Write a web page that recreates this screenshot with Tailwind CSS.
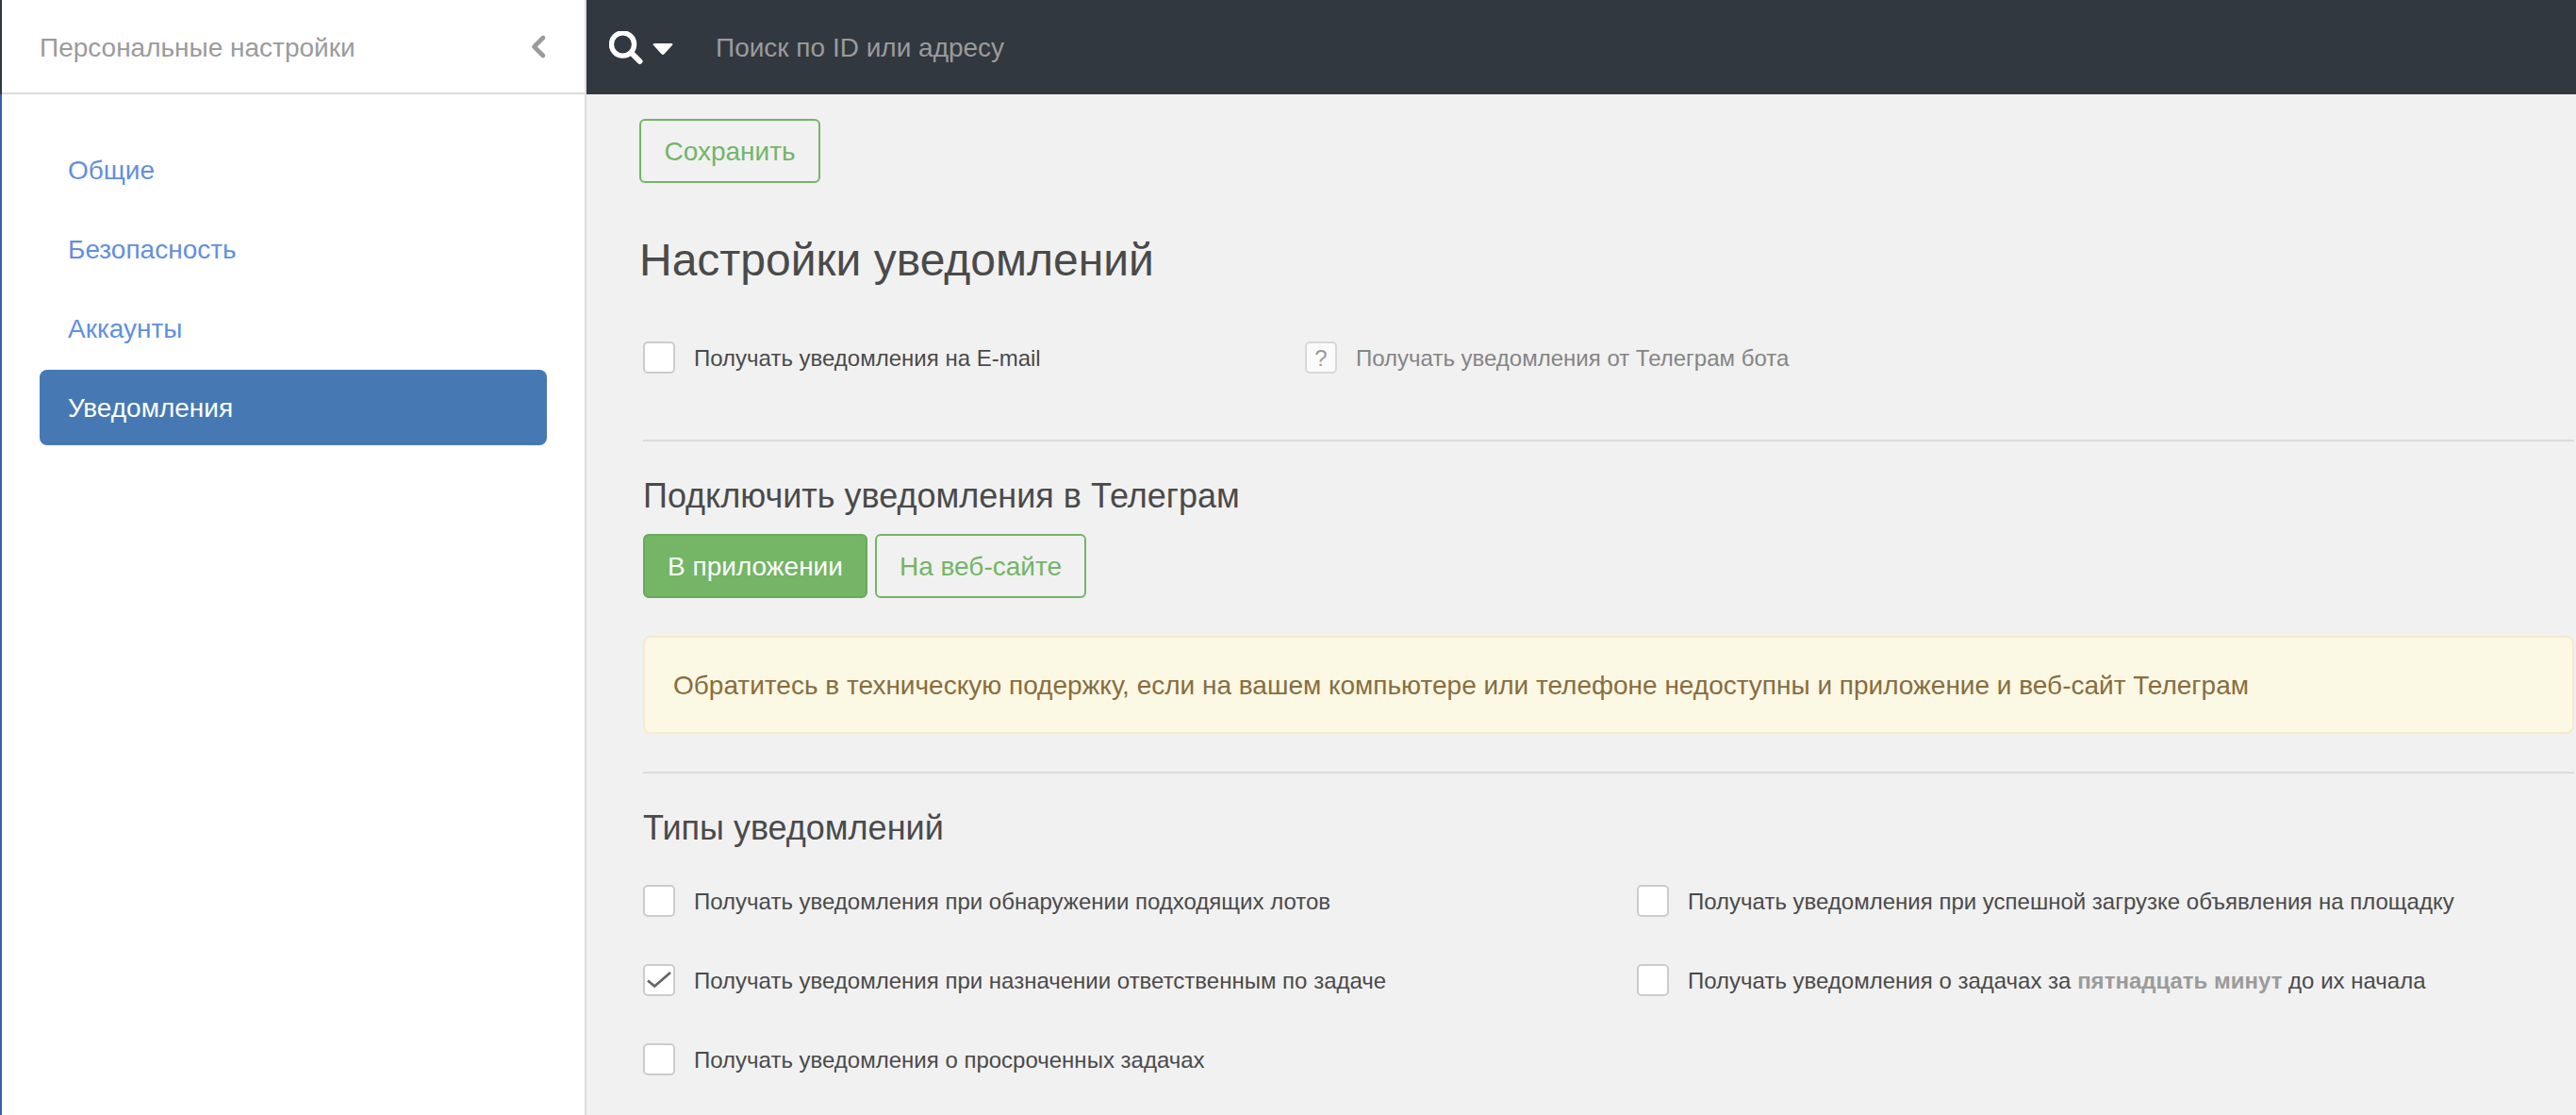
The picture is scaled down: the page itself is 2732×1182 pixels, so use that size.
<!DOCTYPE html>
<html lang="ru">
<head>
    <meta charset="UTF-8">
    <meta name="viewport" content="width=device-width, initial-scale=1.0">
    <title>Настройки уведомлений</title>
    <script src="https://cdn.jsdelivr.net/npm/@tailwindcss/browser@4"></script>
    <style>
        body {
            font-family: 'Liberation Sans', Arial, sans-serif;
        }
    </style>
</head>
<body class="flex h-screen overflow-hidden bg-[#f1f1f1] text-[28px] leading-10 text-[#4a4a4a]">
    <!-- Collapsed main menu edge -->
    <div class="w-0.5 shrink-0 bg-[#3a5fa8]">
        <div class="h-[100px] bg-[#323840]"></div>
    </div>

    <aside class="w-[620px] shrink-0 border-r-2 border-[#dcdcdc] bg-white">
        <div class="flex h-[100px] items-center justify-between border-b-2 border-[#dcdcdc] pl-10 pr-10 text-[#9b9b9b]">
            <span class="pt-1">Персональные настройки</span>
            <svg class="h-7 w-[18px]" viewBox="0 0 18 28" fill="none" stroke="currentColor" stroke-width="4.6" stroke-linecap="round" stroke-linejoin="round">
                <path d="M14 5 4.500 14.500 14 24"/>
            </svg>
        </div>
        <nav class="flex flex-col gap-1 px-10 pt-10 text-[#628fdf]">
            <a href="#" class="rounded-lg px-[30px] pt-[21px] pb-[19px]">Общие</a>
            <a href="#" class="rounded-lg px-[30px] pt-[21px] pb-[19px]">Безопасность</a>
            <a href="#" class="rounded-lg px-[30px] pt-[21px] pb-[19px]">Аккаунты</a>
            <a href="#" class="rounded-lg bg-[#4679b3] px-[30px] pt-[21px] pb-[19px] text-white">Уведомления</a>
        </nav>
    </aside>

    <div class="min-w-0 flex-1">
        <header class="flex h-[100px] items-center bg-[#323840] pl-6 text-[#9b9b9b]">
            <svg class="mt-0.5 h-9 w-9" viewBox="0 0 36 36" fill="none" stroke="#fff">
                <circle cx="14.500" cy="14" r="12.100" stroke-width="5.400"/>
                <path d="M24.500 24 32.500 32" stroke-width="6" stroke-linecap="round"/>
            </svg>
            <svg class="ml-2.5 mt-1 h-3 w-[22px]" viewBox="0 0 22 12" fill="#fff">
                <path d="M1.500 0h19q1.500.5.600 1.700l-8.600 9.500q-1.500 1.400-3 0L.9 1.700Q0 .5 1.500 0Z"/>
            </svg>
            <span class="ml-[45px] pt-0.5">Поиск по ID или адресу</span>
        </header>

        <main class="pl-[60px] pr-0.5 pt-[26px]">
            <button class="-ml-1 block h-[68px] w-48 rounded-md border-2 border-[#73b566] pt-0.5 text-[#73b566]">Сохранить</button>
            <h1 class="-ml-1 mt-[52px] text-5xl leading-[60px]">Настройки уведомлений</h1>

            <div class="mt-14 flex text-2xl leading-9">
                <label class="flex h-[34px] w-[702px] gap-5">
                    <span class="size-[34px] rounded-[5px] border-2 border-[#cccccc] bg-white"></span>
                    Получать уведомления на E-mail
                </label>
                <label class="flex h-[34px] gap-5 text-[#858585]">
                    <span class="size-[34px] rounded-[5px] border-2 border-[#d8d8d8] bg-[#fbfbfb] text-center leading-8 text-[#9b9b9b]">?</span>
                    Получать уведомления от Телеграм бота
                </label>
            </div>

            <hr class="mt-[70px] border-t-2 border-[#dcdcdc]">

            <h2 class="mt-9 text-4xl leading-[44px]">Подключить уведомления в Телеграм</h2>
            <div class="mt-[18px] flex gap-2">
                <button class="h-[68px] w-[238px] rounded-md border-2 border-[#69aa5c] bg-[#74b566] pt-0.5 text-white">В приложении</button>
                <button class="h-[68px] w-56 rounded-md border-2 border-[#73b566] pt-0.5 text-[#73b566]">На веб-сайте</button>
            </div>

            <div class="mt-10 rounded-lg border-2 border-[#f6eacd] bg-[#fbf8e4] px-[30px] pt-[31px] pb-[29px] text-[#886d3f]">
                Обратитесь в техническую подержку, если на вашем компьютере или телефоне недоступны и приложение и веб-сайт Телеграм
            </div>

            <hr class="mt-10 border-t-2 border-[#dcdcdc]">

            <h2 class="mt-9 text-4xl leading-[44px]">Типы уведомлений</h2>
            <div class="mt-[38px] grid grid-cols-[1054px_1fr] gap-y-[50px] text-2xl leading-9">
                <label class="flex h-[34px] gap-5">
                    <span class="size-[34px] rounded-[5px] border-2 border-[#cccccc] bg-white"></span>
                    Получать уведомления при обнаружении подходящих лотов
                </label>
                <label class="flex h-[34px] gap-5">
                    <span class="size-[34px] rounded-[5px] border-2 border-[#cccccc] bg-white"></span>
                    Получать уведомления при успешной загрузке объявления на площадку
                </label>
                <label class="flex h-[34px] gap-5">
                    <span class="size-[34px] rounded-[5px] border-2 border-[#cccccc] bg-white">
                        <svg class="size-[30px]" viewBox="0 0 30 30" fill="none" stroke="#666" stroke-width="2.800">
                            <path d="M3 15.500 10.200 21.500 27 7"/>
                        </svg>
                    </span>
                    Получать уведомления при назначении ответственным по задаче
                </label>
                <label class="flex h-[34px] gap-5">
                    <span class="size-[34px] rounded-[5px] border-2 border-[#cccccc] bg-white"></span>
                    <span>Получать уведомления о задачах за <b class="text-[#9b9b9b]">пятнадцать минут</b> до их начала</span>
                </label>
                <label class="flex h-[34px] gap-5">
                    <span class="size-[34px] rounded-[5px] border-2 border-[#cccccc] bg-white"></span>
                    Получать уведомления о просроченных задачах
                </label>
            </div>
        </main>
    </div>
</body>
</html>
